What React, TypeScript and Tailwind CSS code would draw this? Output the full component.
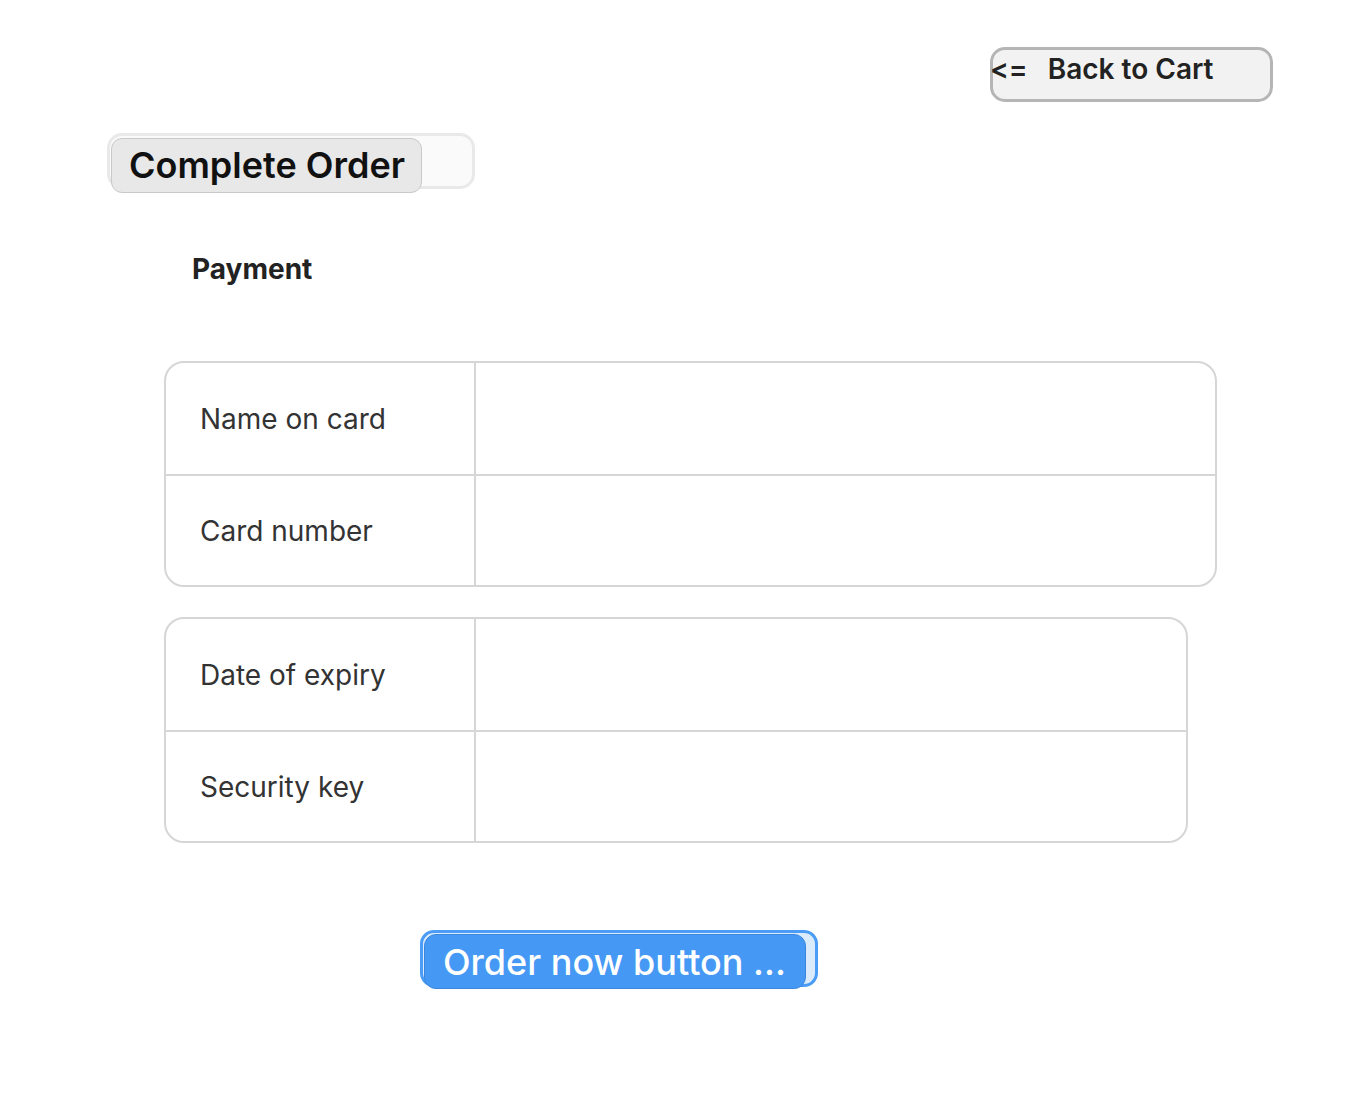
import React from "react";

const rowsA = ["Name on card", "Card number"];
const rowsB = ["Date of expiry", "Security key"];

function Table({ rows, width }: { rows: string[]; width: string }) {
  return (
    <div className={`${width} ml-[164px] border-2 border-[#d6d6d6] rounded-[20px] overflow-hidden`}>
      {rows.map((r, i) => (
        <div key={r} className={`flex h-[111px] ${i > 0 ? "border-t-2 border-[#d6d6d6]" : ""}`}>
          <div className="w-[310px] shrink-0 border-r-2 border-[#d6d6d6] flex items-center pl-[34px] text-[28px] text-[#333333]">
            {r}
          </div>
          <div className="flex-1" />
        </div>
      ))}
    </div>
  );
}

export default function App() {
  return (
    <div className="w-[1356px] h-[1116px] bg-white" style={{ fontFamily: "Inter, 'Noto Sans', sans-serif" }}>
      <div className="flex justify-end pt-[47px] pr-[83px]">
        <div className="w-[283px] h-[55px] border-[3px] border-[#b5b5b5] rounded-[15px] bg-[#f2f2f2] flex items-center text-[28px] font-semibold text-[#222222] leading-none pb-[12px]">
          <span className="ml-[-3px]">&lt;=</span>
          <span className="ml-[20px]">Back to Cart</span>
        </div>
      </div>

      <div className="ml-[107px] mt-[31px] w-[368px] h-[56px] border-[3px] border-[#e9e9e9] rounded-[15px] bg-[#fafafa]">
        <div className="relative left-[1px] top-[2px] w-[311px] h-[55px] bg-[#e8e8e8] border border-[#c9c9c9] rounded-[11px] flex items-center pl-[17px] text-[36px] font-semibold text-[#111111] leading-none pb-[2px]">
          Complete Order
        </div>
      </div>

      <div className="ml-[192px] mt-[66px] text-[28px] font-bold text-[#222222] leading-none">Payment</div>

      <div className="mt-[78px]">
        <Table rows={rowsA} width="w-[1053px]" />
      </div>
      <div className="mt-[30px]">
        <Table rows={rowsB} width="w-[1024px]" />
      </div>

      <div className="ml-[420px] mt-[87px] w-[398px] h-[57px] border-[3px] border-[#4a9cf6] rounded-[14px] bg-[#dcebfc]">
        <div className="relative left-[1px] top-[1px] w-[382px] h-[55px] bg-[#4599f5] border border-[#3a86dc] rounded-[12px] flex items-center pl-[18px] text-[36px] font-medium text-white leading-none">
          Order now button ...
        </div>
      </div>
    </div>
  );
}
